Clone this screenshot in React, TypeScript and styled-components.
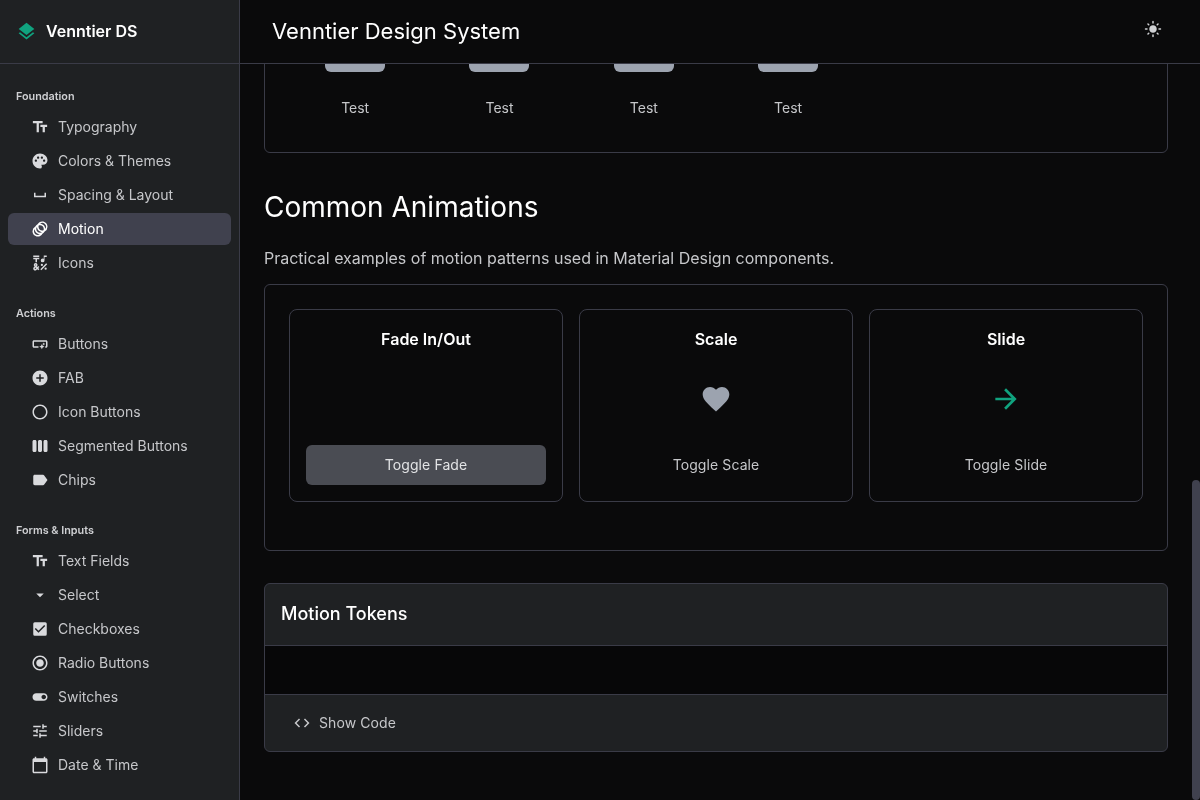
import { useLayoutEffect, useRef } from 'react';
import type { ComponentType } from 'react';
import styled, { createGlobalStyle } from 'styled-components';
import {
    MdAddCircle,
    MdAnimation,
    MdArrowDropDown,
    MdArrowForward,
    MdCalendarToday,
    MdCheckBox,
    MdCode,
    MdEmojiSymbols,
    MdFavorite,
    MdLabel,
    MdLayers,
    MdLightMode,
    MdPalette,
    MdRadioButtonChecked,
    MdRadioButtonUnchecked,
    MdSmartButton,
    MdSpaceBar,
    MdTextFields,
    MdToggleOn,
    MdTune,
    MdViewWeek,
} from 'react-icons/md';

type NavEntry = { label: string; icon: ComponentType<{ size?: number }>; active?: boolean };
type NavGroup = { title: string; items: NavEntry[] };

const navGroups: NavGroup[] = [
    {
        title: 'Foundation',
        items: [
            { label: 'Typography', icon: MdTextFields },
            { label: 'Colors & Themes', icon: MdPalette },
            { label: 'Spacing & Layout', icon: MdSpaceBar },
            { label: 'Motion', icon: MdAnimation, active: true },
            { label: 'Icons', icon: MdEmojiSymbols },
        ],
    },
    {
        title: 'Actions',
        items: [
            { label: 'Buttons', icon: MdSmartButton },
            { label: 'FAB', icon: MdAddCircle },
            { label: 'Icon Buttons', icon: MdRadioButtonUnchecked },
            { label: 'Segmented Buttons', icon: MdViewWeek },
            { label: 'Chips', icon: MdLabel },
        ],
    },
    {
        title: 'Forms & Inputs',
        items: [
            { label: 'Text Fields', icon: MdTextFields },
            { label: 'Select', icon: MdArrowDropDown },
            { label: 'Checkboxes', icon: MdCheckBox },
            { label: 'Radio Buttons', icon: MdRadioButtonChecked },
            { label: 'Switches', icon: MdToggleOn },
            { label: 'Sliders', icon: MdTune },
            { label: 'Date & Time', icon: MdCalendarToday },
        ],
    },
];

const App = () => {
    const scroller = useRef<HTMLElement>(null);

    // the page is shown scrolled down to the end of the Motion article
    useLayoutEffect(() => {
        if (scroller.current) {
            scroller.current.scrollTop = scroller.current.scrollHeight;
        }
    }, []);

    return (
        <Shell>
            <GlobalStyle />
            <Sidebar>
                <Brand>
                    <BrandIcon>
                        <MdLayers size={21} />
                    </BrandIcon>
                    <BrandName>Venntier DS</BrandName>
                </Brand>
                <Nav>
                    {navGroups.map((group) => (
                        <NavSection key={group.title}>
                            <NavTitle>{group.title}</NavTitle>
                            <NavList>
                                {group.items.map(({ label, icon: Icon, active }) => (
                                    <NavItem key={label} $active={active}>
                                        <Icon size={18} />
                                        {label}
                                    </NavItem>
                                ))}
                            </NavList>
                        </NavSection>
                    ))}
                </Nav>
            </Sidebar>
            <Column>
                <TopBar>
                    <TopTitle>Venntier Design System</TopTitle>
                    <ThemeButton aria-label="Toggle theme">
                        <MdLightMode size={18} />
                    </ThemeButton>
                </TopBar>
                <MainWrap>
                    <Main ref={scroller}>
                        <ScrolledPast />
                        <Panel>
                            <TestGrid>
                                {[0, 1, 2, 3].map((n) => (
                                    <TestCell key={n}>
                                        <TestBlock />
                                        Test
                                    </TestCell>
                                ))}
                            </TestGrid>
                        </Panel>

                        <SectionTitle>Common Animations</SectionTitle>
                        <SectionText>Practical examples of motion patterns used in Material Design components.</SectionText>
                        <Panel>
                            <DemoGrid>
                                <DemoCard>
                                    <DemoTitle>Fade In/Out</DemoTitle>
                                    <DemoStage />
                                    <ToggleButton $filled>Toggle Fade</ToggleButton>
                                </DemoCard>
                                <DemoCard>
                                    <DemoTitle>Scale</DemoTitle>
                                    <DemoStage $color="#9ca3af">
                                        <MdFavorite size={32} />
                                    </DemoStage>
                                    <ToggleButton>Toggle Scale</ToggleButton>
                                </DemoCard>
                                <DemoCard>
                                    <DemoTitle>Slide</DemoTitle>
                                    <DemoStage $color="#10a37f">
                                        <MdArrowForward size={32} />
                                    </DemoStage>
                                    <ToggleButton>Toggle Slide</ToggleButton>
                                </DemoCard>
                            </DemoGrid>
                        </Panel>

                        <TokenCard>
                            <TokenHeader>Motion Tokens</TokenHeader>
                            <TokenBody />
                            <TokenFooter>
                                <CodeButton>
                                    <MdCode size={18} />
                                    Show Code
                                </CodeButton>
                            </TokenFooter>
                        </TokenCard>
                    </Main>
                    <ScrollThumb />
                </MainWrap>
            </Column>
        </Shell>
    );
};
export default App;

// START: styling
const GlobalStyle = createGlobalStyle`
    * {
        box-sizing: border-box;
    }

    html, body {
        margin: 0;
        height: 100%;
        overflow: hidden;
        background: #0a0a0b;
        font-family: Inter, "Liberation Sans", sans-serif;
    }
`;

const Shell = styled.div`
    display: flex;
    width: 100vw;
    height: 100vh;
    background: #0a0a0b;
    color: #fff;
    will-change: transform;
`;

const Sidebar = styled.aside`
    flex: 0 0 240px;
    display: flex;
    flex-direction: column;
    background: #1f2123;
    border-right: 1px solid #3a3b47;
    overflow: hidden;
`;

const Brand = styled.div`
    flex: 0 0 64px;
    display: flex;
    align-items: center;
    gap: 9px;
    padding: 0 0 1px 16px;
    border-bottom: 1px solid #3a3b47;
`;

const BrandIcon = styled.span`
    display: flex;
    color: #10a37f;
`;

const BrandName = styled.span`
    font-size: 16px;
    line-height: 24px;
    font-weight: 600;
    color: #fff;
`;

const Nav = styled.nav`
    padding: 24px 8px 0;
`;

const NavSection = styled.section`
    margin-bottom: 26px;
`;

const NavTitle = styled.div`
    padding: 1px 0 0 8px;
    margin-bottom: 6px;
    font-size: 10.8px;
    line-height: 16px;
    font-weight: 600;
    color: #cfd0d3;
`;

const NavList = styled.div`
    display: flex;
    flex-direction: column;
    gap: 2px;
`;

const NavItem = styled.a<{ $active?: boolean }>`
    display: flex;
    align-items: center;
    gap: 9px;
    height: 32px;
    padding-left: 23px;
    border-radius: 6px;
    font-size: 14px;
    line-height: 20px;
    color: ${(p) => (p.$active ? '#ffffff' : '#c6c7ca')};
    background: ${(p) => (p.$active ? '#40414e' : 'transparent')};

    svg {
        flex: none;
        color: ${(p) => (p.$active ? '#ffffff' : '#d9dadd')};
    }
`;

const Column = styled.div`
    flex: 1;
    min-width: 0;
    display: flex;
    flex-direction: column;
`;

const TopBar = styled.header`
    flex: 0 0 64px;
    display: flex;
    align-items: center;
    justify-content: space-between;
    padding: 0 32px 1px;
    border-bottom: 1px solid #3a3b47;
`;

const TopTitle = styled.h1`
    margin: 0;
    font-size: 22px;
    line-height: 28px;
    font-weight: 400;
    color: #fff;
`;

const ThemeButton = styled.button`
    display: flex;
    justify-content: center;
    width: 30px;
    padding: 0 0 5px;
    border: 0;
    background: none;
    color: #d0d1d4;
`;

const MainWrap = styled.div`
    position: relative;
    flex: 1;
    min-height: 0;
    display: flex;
`;

const Main = styled.main`
    flex: 1;
    min-width: 0;
    overflow-y: auto;
    padding: 24px 32px 48px 24px;
    scrollbar-width: none;
`;

const ScrollThumb = styled.div`
    position: absolute;
    right: 0;
    bottom: 0;
    width: 8px;
    height: 320px;
    border-radius: 4px;
    background: #40414e;
`;

const ScrolledPast = styled.div`
    height: 856px;
`;

const Panel = styled.div`
    padding: 24px;
    border: 1px solid #3a3b47;
    border-radius: 6px;
`;

const TestGrid = styled.div`
    display: grid;
    grid-template-columns: repeat(6, 1fr);
    gap: 12px;
    padding-bottom: 10px;
`;

const TestCell = styled.div`
    display: flex;
    flex-direction: column;
    align-items: center;
    font-size: 14px;
    line-height: 20px;
    color: #c6c7ca;
`;

const TestBlock = styled.div`
    width: 60px;
    height: 60px;
    margin-bottom: 26px;
    border-radius: 6px;
    background: #9ca3af;
`;

const SectionTitle = styled.h2`
    margin: 36px 0 21px;
    font-size: 28px;
    line-height: 36px;
    font-weight: 400;
    color: #fff;
`;

const SectionText = styled.p`
    margin: 0 0 14px;
    font-size: 16px;
    line-height: 24px;
    color: #c6c7ca;
`;

const DemoGrid = styled.div`
    display: grid;
    grid-template-columns: repeat(3, 1fr);
    gap: 16px;
    margin-bottom: 24px;
`;

const DemoCard = styled.div`
    padding: 16px;
    border: 1px solid #3a3b47;
    border-radius: 8px;
`;

const DemoTitle = styled.h3`
    margin: 0;
    font-size: 16px;
    line-height: 27px;
    font-weight: 600;
    text-align: center;
    color: #fff;
`;

const DemoStage = styled.div<{ $color?: string }>`
    display: flex;
    align-items: center;
    justify-content: center;
    height: 64px;
    margin: 14px 0;
    color: ${(p) => p.$color ?? 'inherit'};
`;

const ToggleButton = styled.button<{ $filled?: boolean }>`
    display: block;
    width: 100%;
    height: 40px;
    padding: 0 0 1px;
    border: 0;
    border-radius: 6px;
    font-family: inherit;
    font-size: 14px;
    line-height: 20px;
    letter-spacing: 0.1px;
    color: ${(p) => (p.$filled ? '#e2e3e5' : '#c6c7ca')};
    background: ${(p) => (p.$filled ? '#4a4c53' : 'transparent')};
`;

const TokenCard = styled.div`
    margin-top: 32px;
    border: 1px solid #3a3b47;
    border-radius: 6px;
    background: #1f2123;
    overflow: hidden;
`;

const TokenHeader = styled.div`
    display: flex;
    align-items: center;
    height: 62px;
    padding: 0 0 1px 16px;
    border-bottom: 1px solid #3a3b47;
    font-size: 18px;
    line-height: 28px;
    font-weight: 500;
    color: #fff;
`;

const TokenBody = styled.div`
    height: 48px;
    background: #070708;
`;

const TokenFooter = styled.div`
    display: flex;
    align-items: center;
    height: 57px;
    padding-left: 16px;
    border-top: 1px solid #3a3b47;
`;

const CodeButton = styled.button`
    display: flex;
    align-items: center;
    gap: 8px;
    padding: 0 12px 1px;
    border: 0;
    background: none;
    font-family: inherit;
    font-size: 14px;
    line-height: 20px;
    letter-spacing: 0.1px;
    color: #c6c7ca;
`;
